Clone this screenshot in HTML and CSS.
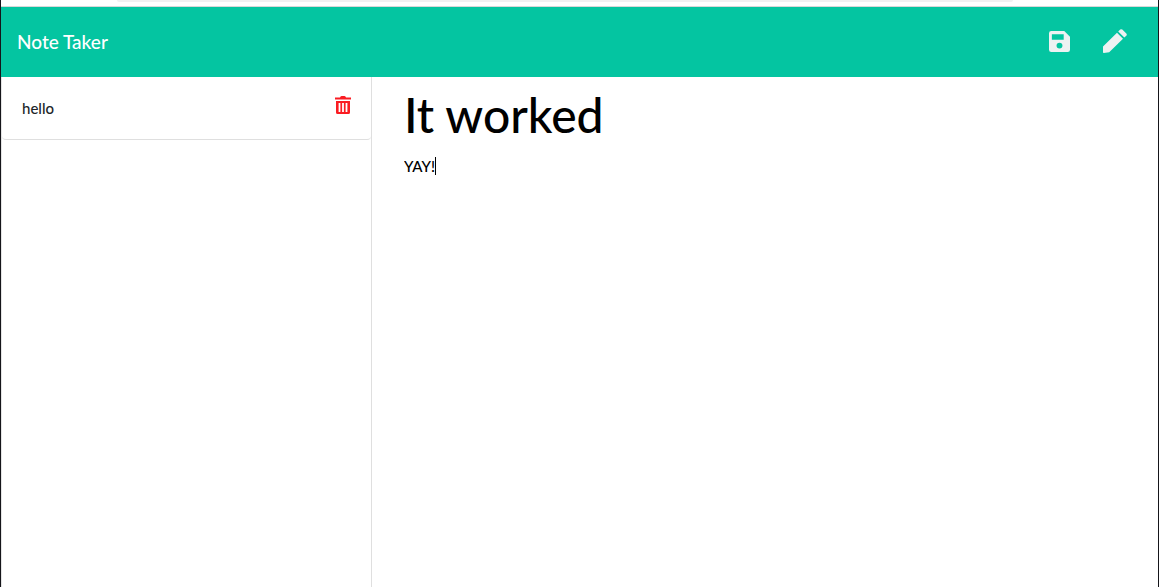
FILE: index.html
```html
<!DOCTYPE html>
<html lang="en">
<head>
<meta charset="utf-8">
<title>Note Taker</title>
<link rel="stylesheet" href="styles.css">
</head>
<body>
<div class="window">
  <div class="toolbar"><div class="address"></div></div>
  <header class="navbar">
    <a class="brand" href="#">Note Taker</a>
    <div class="actions">
      <button class="icon-button" type="button" aria-label="Save note">
        <svg width="21" height="21" viewBox="0 0 22 22"><path fill="currentColor" fill-rule="evenodd" d="M2.4 0H16L22 6V19.6Q22 22 19.6 22H2.4Q0 22 0 19.6V2.4Q0 0 2.4 0ZM3 3.4V9.2H15.4V3.4ZM11 12.2A3.1 3.1 0 1 0 11 18.4A3.1 3.1 0 1 0 11 12.2Z"/></svg>
      </button>
      <button class="icon-button" type="button" aria-label="New note">
        <svg width="24" height="24" viewBox="0 0 24 24"><path fill="currentColor" d="M14 3.7L20 9.7L6.2 23.2L.8 24Q0 24 0 23.2V17.4ZM15.2 2.5L17.2.6Q18.2-.3 19.3.6L23.3 4.6Q24.3 5.6 23.3 6.7L21.3 8.6Z"/></svg>
      </button>
    </div>
  </header>
  <div class="content">
    <aside class="sidebar">
      <ul class="notes">
        <li class="note">
          <span>hello</span>
          <button class="delete" type="button" aria-label="Delete hello">
            <svg width="16" height="18" viewBox="0 0 16 18"><path fill="currentColor" fill-rule="evenodd" d="M0 1.6H5Q5.3 0 6.5 0H9.5Q10.7 0 11 1.6H16V3.6H0ZM1 5H15V16.4Q15 18 13.4 18H2.6Q1 18 1 16.4ZM3.6 7V16H5.4V7ZM7.1 7V16H8.9V7ZM10.6 7V16H12.4V7Z"/></svg>
          </button>
        </li>
      </ul>
    </aside>
    <main class="editor">
      <input class="note-title" type="text" aria-label="Note title" value="It worked">
      <div class="note-body">
        <textarea class="note-text" aria-label="Note text" spellcheck="false">YAY!</textarea>
        <span class="caret"></span>
      </div>
    </main>
  </div>
</div>
</body>
</html>
```
FILE: styles.css
```css
* { box-sizing: border-box; }

body {
  margin: 0;
  background: #fff;
  color: #212529;
  font: 500 15px/24px Lato, "Liberation Sans", sans-serif;
}

button {
  padding: 0;
  border: 0;
  background: none;
  cursor: pointer;
}

svg { display: block; }

.window {
  display: flex;
  flex-direction: column;
  min-height: 100vh;
  border: solid #15151a;
  border-width: 0 1px;
}

.toolbar {
  height: 7px;
  padding: 0 12.5% 0 10%;
  border-bottom: 1px solid #d8d8d8;
}

.address {
  height: 2px;
  border-radius: 0 0 8px 8px;
  background: #f1f1f2;
}

.navbar {
  display: flex;
  align-items: center;
  justify-content: space-between;
  height: 70px;
  padding: 0 31px 0 16px;
  background: #04c5a1;
}

.brand {
  color: #fff;
  font-size: 19px;
  text-decoration: none;
}

.actions {
  display: flex;
  align-items: center;
  gap: 33px;
  padding-bottom: 2px;
}

.icon-button { color: #edf2f2; }

.content {
  display: grid;
  grid-template-columns: 32% 1fr;
  flex: 1;
  border-left: 1px solid #e4e4e4;
}

.sidebar { border-right: 1px solid #dfdfdf; }

.notes {
  margin: 0;
  padding: 0;
  list-style: none;
}

.note {
  display: flex;
  align-items: center;
  justify-content: space-between;
  height: 63px;
  padding: 0 20px;
  border-bottom: 1px solid #dfdfdf;
  border-radius: 0 0 4px 4px;
}

.delete {
  padding-bottom: 6px;
  color: #fa1c22;
}

.editor {
  display: flex;
  flex-direction: column;
  padding: 7px 32px;
}

.note-title,
.note-text {
  width: 100%;
  padding: 0;
  border: 0;
  outline: 0;
  background: none;
  color: #000;
  font: inherit;
}

.note-title {
  height: 60px;
  font-size: 48px;
}

.note-body {
  position: relative;
  display: flex;
  flex: 1;
  margin-top: 10px;
}

.note-text { resize: none; }

.caret {
  position: absolute;
  top: 3px;
  left: 31px;
  width: 1px;
  height: 18px;
  background: #000;
}
```
